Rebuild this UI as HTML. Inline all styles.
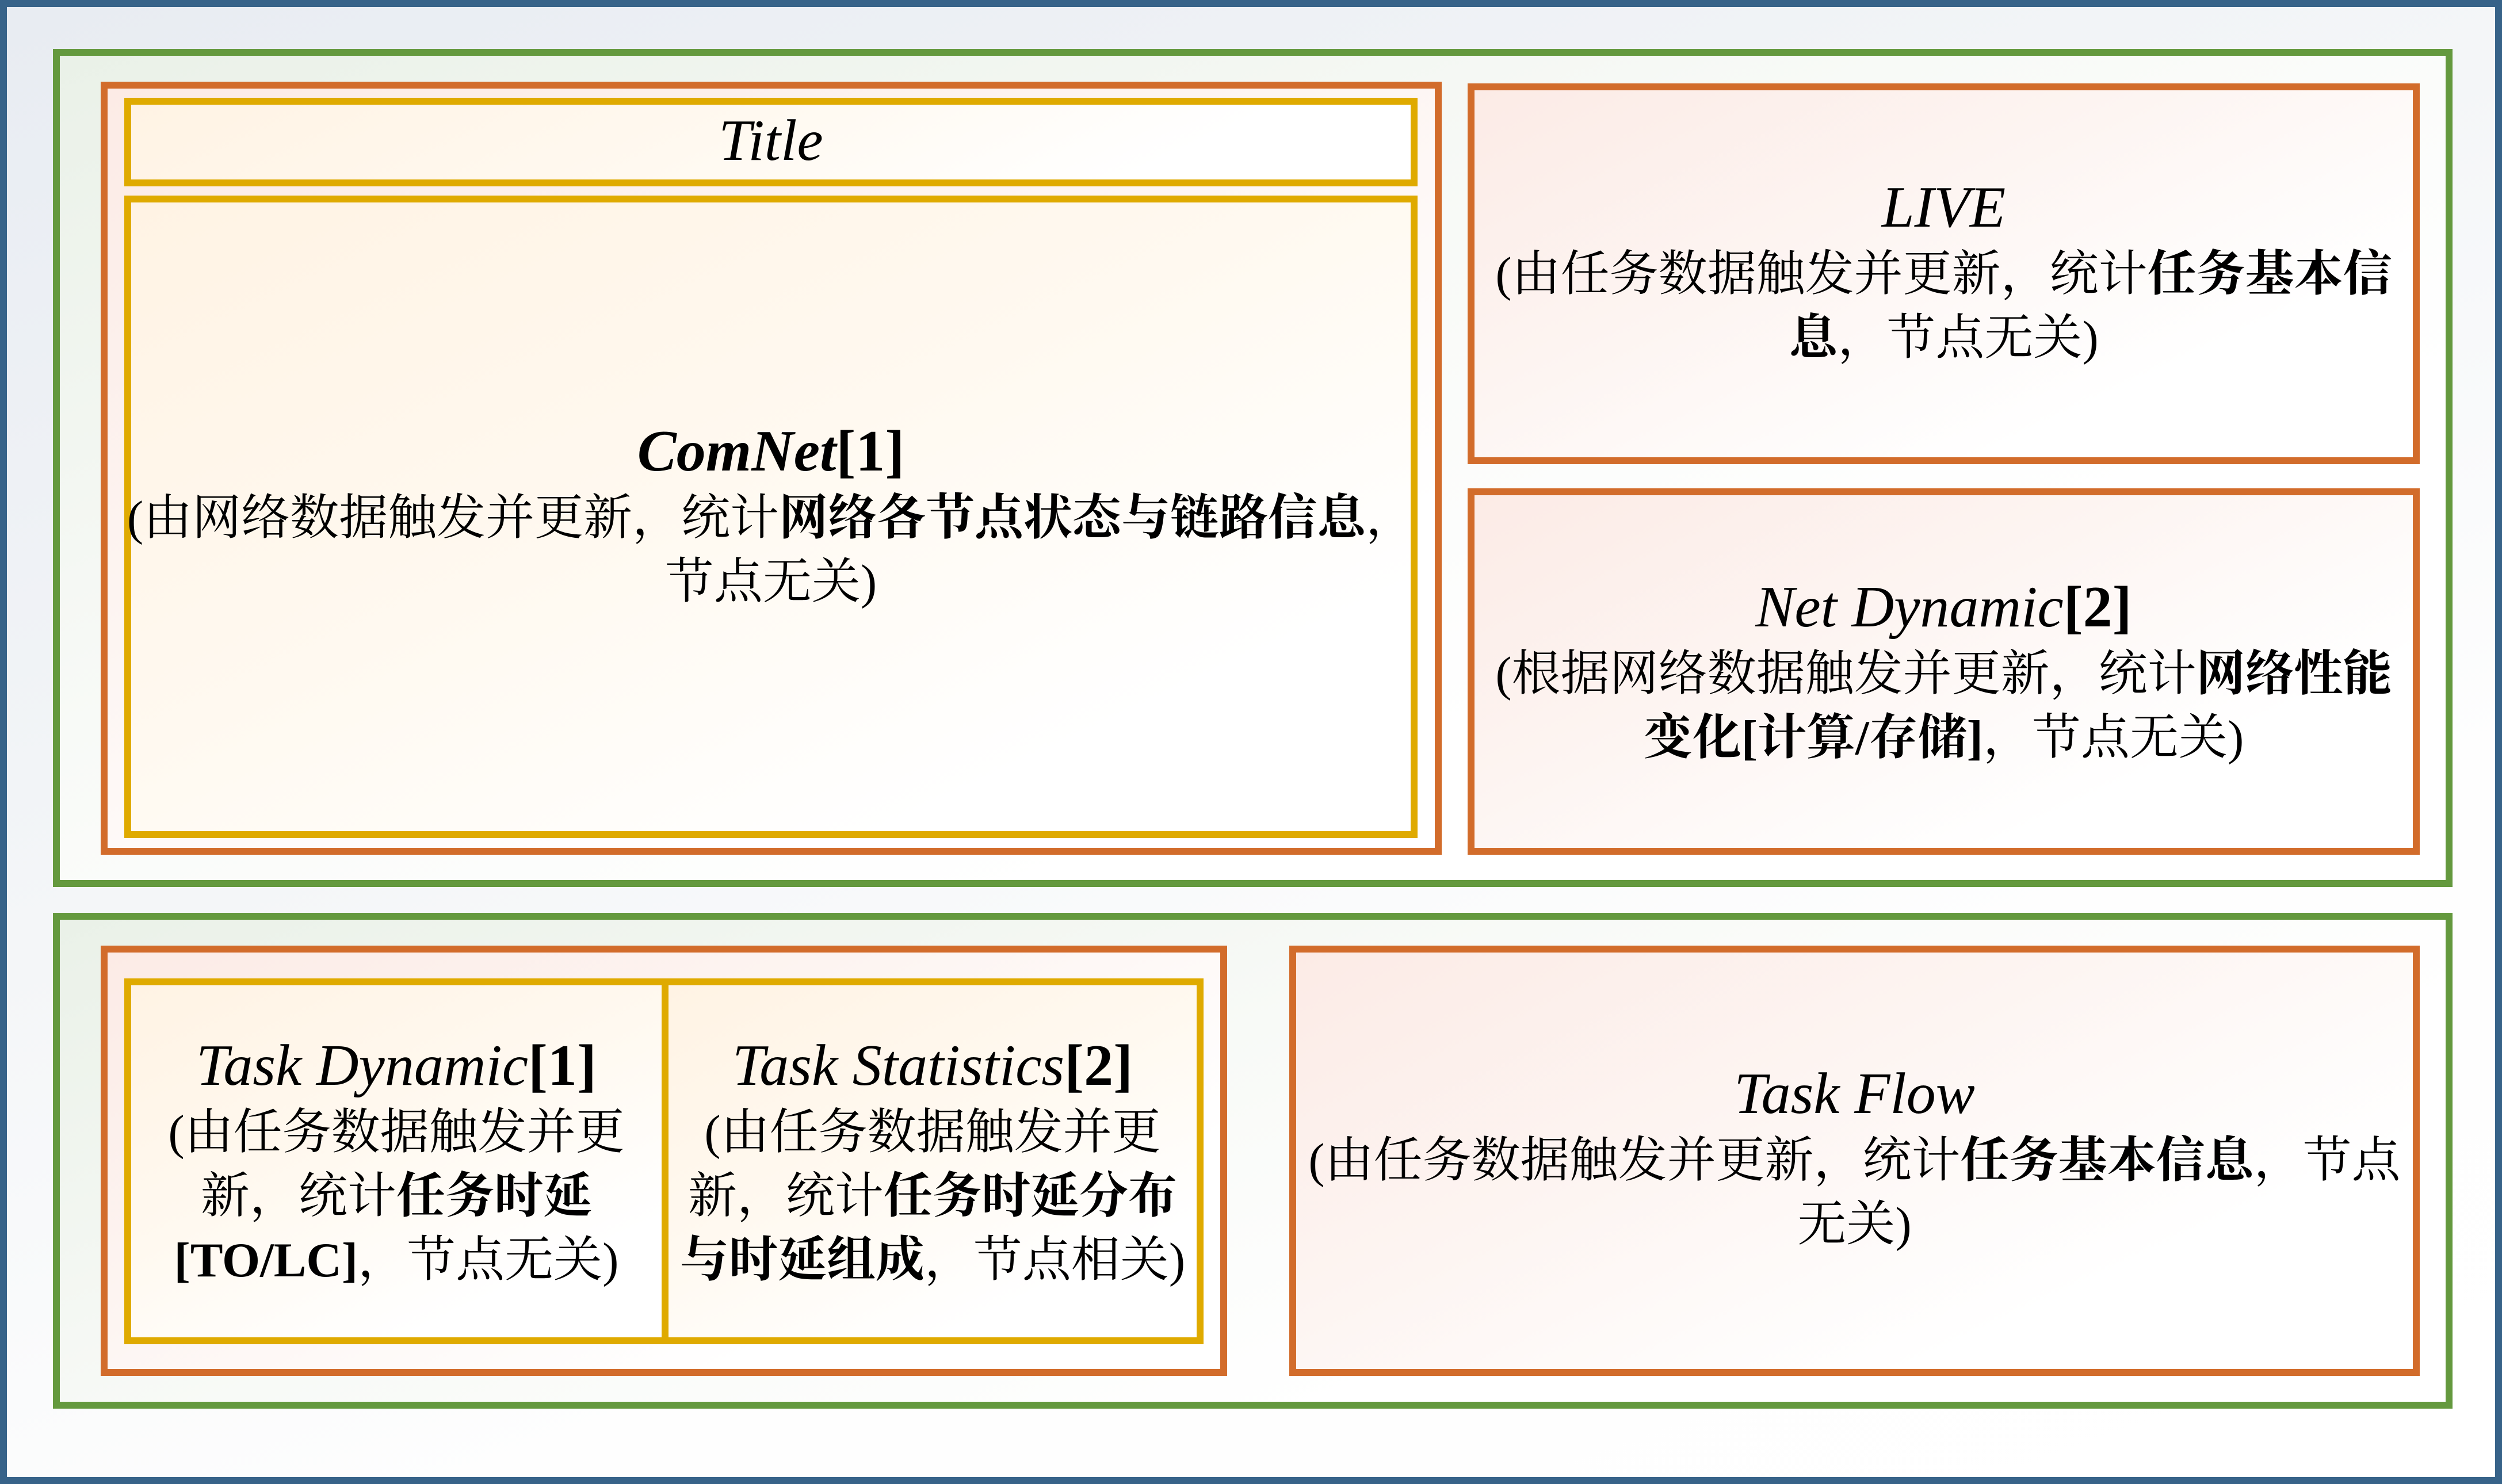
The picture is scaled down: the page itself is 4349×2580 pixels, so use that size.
<!DOCTYPE html>
<html><head><meta charset="utf-8"><style>
*{margin:0;padding:0;box-sizing:border-box}
body{width:4349px;height:2580px;position:relative;overflow:hidden;background:#fff}
.b{position:absolute;border:12px solid}
.blue{border:12px solid #376389;left:0;top:0;width:4349px;height:2580px;background:linear-gradient(160deg,#e8ecf2 0%,#f4f6f8 40%,#fefefe 70%,#fff 100%)}
.green{border-color:#64993e;background:linear-gradient(160deg,#eaf1e8 0%,#f8faf7 40%,#fff 70%)}
.orange{border-color:#d26c2b;background:linear-gradient(155deg,#fcebe6 0%,#fdf5f2 40%,#fff 75%)}
.yellow{border-color:#dfaa00;background:linear-gradient(155deg,#fff3e4 0%,#fff9f0 45%,#fff 80%)}
.t{position:absolute;text-align:center;white-space:nowrap;font-family:"Liberation Serif","Noto Serif CJK SC",serif;font-size:85px;line-height:111px;color:#000}
.h{font-size:102px;font-style:italic}
.hb{font-size:102px;font-weight:bold}
b{font-weight:bold}
</style></head><body>
<div class="blue"></div>
<div class="b green" style="left:92px;top:85px;width:4171px;height:1457px"></div>
<div class="b green" style="left:92px;top:1587px;width:4171px;height:862px"></div>

<div class="b orange" style="left:175px;top:142px;width:2331px;height:1344px"></div>
<div class="b yellow" style="left:216px;top:170px;width:2248px;height:154px"></div>
<div class="b yellow" style="left:216px;top:340px;width:2248px;height:1117px"></div>

<div class="b orange" style="left:2551px;top:145px;width:1655px;height:662px"></div>
<div class="b orange" style="left:2551px;top:849px;width:1655px;height:637px"></div>

<div class="b orange" style="left:175px;top:1644px;width:1958px;height:748px"></div>
<div class="b yellow" style="left:216px;top:1701px;width:946px;height:636px"></div>
<div class="b yellow" style="left:1150px;top:1701px;width:942px;height:636px"></div>

<div class="b orange" style="left:2241px;top:1644px;width:1965px;height:748px"></div>

<div class="t" style="left:216px;width:2248px;top:189px"><span class="h">Title</span></div>

<div class="t" style="left:216px;width:2248px;top:729px"><span class="h"><b>ComNet</b></span><span class="hb">[1]</span><br>(由网络数据触发并更新，统计<b>网络各节点状态与链路信息</b>，<br>节点无关)</div>

<div class="t" style="left:2551px;width:1655px;top:305px"><span class="h">LIVE</span><br>(由任务数据触发并更新，统计<b>任务基本信</b><br><b>息</b>，节点无关)</div>

<div class="t" style="left:2551px;width:1655px;top:1000px"><span class="h">Net Dynamic</span><span class="hb">[2]</span><br>(根据网络数据触发并更新，统计<b>网络性能</b><br><b>变化[计算/存储]</b>，节点无关)</div>

<div class="t" style="left:216px;width:946px;top:1797px"><span class="h">Task Dynamic</span><span class="hb">[1]</span><br>(由任务数据触发并更<br>新，统计<b>任务时延</b><br><b>[TO/LC]</b>，节点无关)</div>

<div class="t" style="left:1150px;width:942px;top:1797px"><span class="h">Task Statistics</span><span class="hb">[2]</span><br>(由任务数据触发并更<br>新，统计<b>任务时延分布</b><br><b>与时延组成</b>，节点相关)</div>

<div class="t" style="left:2241px;width:1965px;top:1846px"><span class="h">Task Flow</span><br>(由任务数据触发并更新，统计<b>任务基本信息</b>，节点<br>无关)</div>
</body></html>
